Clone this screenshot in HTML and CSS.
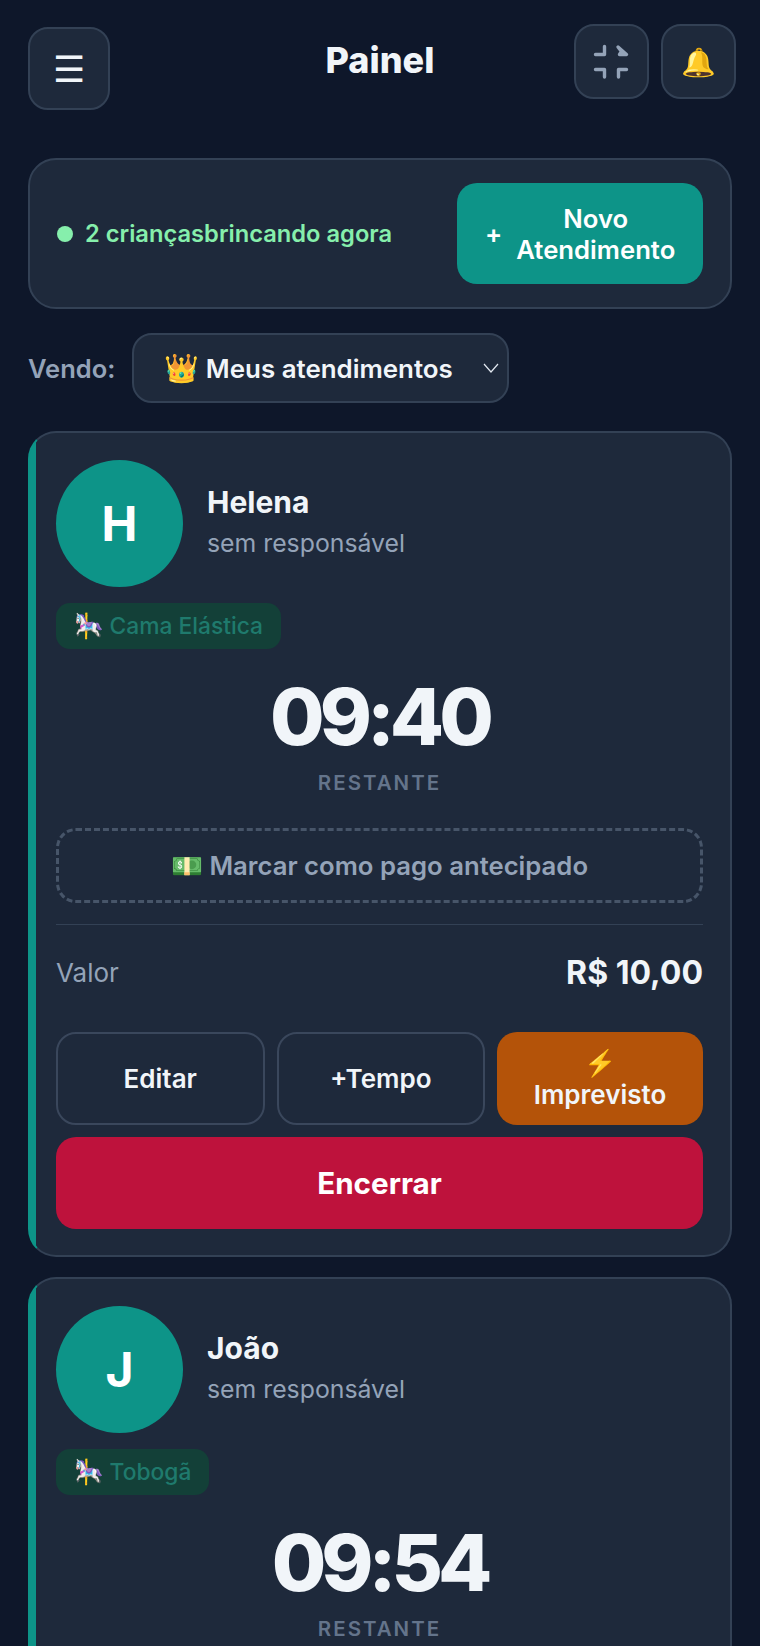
FILE: index.html
```html
<!DOCTYPE html>
<html lang="pt-BR">
<head>
    <meta charset="UTF-8">
    <meta name="viewport" content="width=device-width, initial-scale=1.0">
    <title>Painel</title>
    <link rel="stylesheet" href="styles.css">
</head>
<body>
    <header class="topbar">
        <button class="icon-btn menu-btn" aria-label="Menu">☰</button>
        <h1 class="title">Painel</h1>
        <div class="top-actions">
            <button class="icon-btn small" aria-label="Compactar">
                <svg class="compress" viewBox="0 0 44 44" fill="none" stroke="#94a3b8" stroke-width="3.4" stroke-linecap="round" stroke-linejoin="round">
                    <path d="M5.5 14.5H14.5V6.5"/>
                    <path d="M28 7L36.5 14.5H29.5L31.5 11.5Z" fill="#94a3b8"/>
                    <path d="M5.5 29.5H14.5V37"/>
                    <path d="M36.5 29.5H28.5V37"/>
                </svg>
            </button>
            <button class="icon-btn small emoji-btn" aria-label="Avisos">🔔</button>
        </div>
    </header>

    <section class="status-card">
        <div class="status"><span class="dot"></span><span>2 crianças</span><span>brincando agora</span></div>
        <button class="new-btn"><span class="plus">+</span><span>Novo Atendimento</span></button>
    </section>

    <div class="filter">
        <label class="filter-label">Vendo:</label>
        <div class="select">
            <span><span class="select-emoji">👑</span> Meus atendimentos</span>
            <svg class="chevron" viewBox="0 0 16 16" fill="none" stroke="#e2e8f0" stroke-width="1.2"><path d="M1 4l7 8 7-8"/></svg>
        </div>
    </div>

    <article class="card">
        <div class="person">
            <div class="avatar">H</div>
            <div>
                <div class="name">Helena</div>
                <div class="guardian">sem responsável</div>
            </div>
        </div>
        <span class="badge"><span class="badge-emoji">🎠</span> Cama Elástica</span>
        <div class="timer">09:40</div>
        <div class="timer-label">RESTANTE</div>
        <button class="prepaid">💵 Marcar como pago antecipado</button>
        <div class="value-row">
            <span class="value-label">Valor</span>
            <span class="value">R$ 10,00</span>
        </div>
        <div class="actions">
            <button class="btn">Editar</button>
            <button class="btn">+Tempo</button>
            <button class="btn btn-orange">⚡ Imprevisto</button>
        </div>
        <button class="btn-end">Encerrar</button>
    </article>

    <article class="card">
        <div class="person">
            <div class="avatar">J</div>
            <div>
                <div class="name">João</div>
                <div class="guardian">sem responsável</div>
            </div>
        </div>
        <span class="badge"><span class="badge-emoji">🎠</span> Tobogã</span>
        <div class="timer">09:54</div>
        <div class="timer-label">RESTANTE</div>
    </article>
</body>
</html>
```

FILE: styles.css
```css
* {
    box-sizing: border-box;
}
html, body {
    height: 1646px;
    overflow: hidden;
}
body {
    margin: 0;
    padding: 24px 28px 0;
    background: #0e172a;
    color: #f1f5f9;
    font-family: Inter, "Noto Sans", sans-serif;
}
button {
    font-family: inherit;
    cursor: pointer;
}
.topbar {
    display: grid;
    grid-template-columns: 1fr auto 1fr;
    align-items: start;
    margin-right: -4px;
}
.icon-btn {
    background: #1e293b;
    border: 2px solid #334155;
    border-radius: 20px;
    color: #f1f5f9;
    padding: 0;
    display: flex;
    align-items: center;
    justify-content: center;
}
.menu-btn {
    width: 82px;
    height: 83px;
    margin-top: 3px;
    font-size: 36px;
}
.small {
    width: 75px;
    height: 75px;
}
.title {
    margin: 14px 4px 0 0;
    font-size: 36px;
    line-height: 44px;
    font-weight: 800;
}
.top-actions {
    display: flex;
    justify-content: flex-end;
    gap: 12px;
}
.compress {
    width: 44px;
    height: 44px;
}
.emoji-btn {
    font-size: 28px;
}
.status-card {
    display: flex;
    align-items: center;
    justify-content: space-between;
    height: 151px;
    margin-top: 48px;
    padding: 0 27px;
    background: #1e293b;
    border: 2px solid #334155;
    border-radius: 28px;
}
.status {
    display: flex;
    align-items: center;
    color: #86efac;
    font-size: 23.7px;
    font-weight: 600;
}
.dot {
    width: 16px;
    height: 16px;
    margin-right: 12px;
    background: #86efac;
    border-radius: 50%;
}
.new-btn {
    display: flex;
    align-items: center;
    gap: 14px;
    width: 246px;
    height: 101px;
    padding: 0 28px;
    background: #0d9488;
    border: 0;
    border-radius: 20px;
    color: #fff;
    font-size: 25.7px;
    font-weight: 600;
    line-height: 31px;
}
.filter {
    display: flex;
    align-items: center;
    gap: 17px;
    margin-top: 24px;
}
.filter-label {
    color: #94a3b8;
    font-size: 25.5px;
    font-weight: 600;
}
.select {
    display: flex;
    align-items: center;
    justify-content: space-between;
    width: 377px;
    height: 70px;
    padding: 0 8px 0 30px;
    background: #1e293b;
    border: 2px solid #334155;
    border-radius: 20px;
    font-size: 25.9px;
    font-weight: 600;
}
.select-emoji {
    font-size: 28px;
}
.chevron {
    width: 16px;
    height: 16px;
}
.card {
    display: flex;
    flex-direction: column;
    align-items: stretch;
    margin-top: 28px;
    padding: 27px 27px 26px 26px;
    background: #1e293b linear-gradient(90deg, #0d9488 6px, #1e293b 6px) no-repeat;
    border: 2px solid #334155;
    border-left-color: #0d9488;
    border-radius: 28px;
}
.card + .card {
    margin-top: 20px;
    min-height: 600px;
}
.person {
    display: flex;
    align-items: flex-start;
    gap: 24px;
}
.avatar {
    display: flex;
    align-items: center;
    justify-content: center;
    width: 127px;
    height: 127px;
    background: #0d9488;
    border-radius: 50%;
    color: #fff;
    font-size: 48px;
    font-weight: 700;
}
.name {
    margin-top: 25px;
    font-size: 30px;
    line-height: 34px;
    font-weight: 700;
}
.guardian {
    margin-top: 8px;
    color: #94a3b8;
    font-size: 24.8px;
    line-height: 32px;
}
.badge {
    align-self: flex-start;
    margin-top: 16px;
    padding: 0 17.5px;
    height: 46px;
    line-height: 46px;
    background: #134038;
    border-radius: 14px;
    color: #1f7a6d;
    font-size: 22.8px;
    font-weight: 500;
}
.badge-emoji {
    font-size: 24px;
}
.timer {
    margin-top: 25px;
    text-align: center;
    font-size: 79px;
    line-height: 84px;
    font-weight: 800;
    letter-spacing: -5px;
}
.timer-label {
    margin-top: 11px;
    text-align: center;
    color: #64748b;
    font-size: 20.5px;
    line-height: 28px;
    font-weight: 600;
    letter-spacing: 2px;
}
.prepaid {
    height: 75px;
    margin-top: 31px;
    background: transparent;
    border: 3px dashed #475569;
    border-radius: 20px;
    color: #94a3b8;
    font-size: 25.7px;
    font-weight: 600;
}
.value-row {
    display: flex;
    justify-content: space-between;
    align-items: center;
    height: 96px;
    margin-top: 21px;
    border-top: 1px solid #334155;
}
.value-label {
    color: #94a3b8;
    font-size: 26px;
}
.value {
    font-size: 32px;
    font-weight: 700;
}
.actions {
    display: grid;
    grid-template-columns: 1fr 1fr 206px;
    gap: 12px;
    margin-top: 12px;
}
.btn {
    height: 93px;
    padding: 0 24px;
    background: transparent;
    border: 2px solid #3a475c;
    border-radius: 20px;
    color: #f1f5f9;
    font-size: 26px;
    line-height: 32px;
    font-weight: 600;
}
.btn-orange {
    background: #b45309;
    border: 0;
}
.btn-end {
    height: 92px;
    margin-top: 12px;
    background: #be123c;
    border: 0;
    border-radius: 20px;
    color: #fff;
    font-size: 29.6px;
    font-weight: 700;
}
```
